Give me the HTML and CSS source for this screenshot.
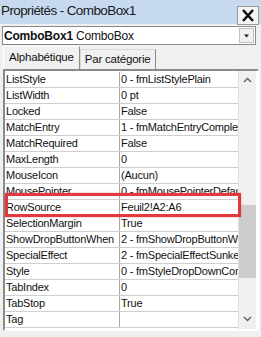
FILE: index.html
```html
<!DOCTYPE html>
<html lang="fr">
<head>
    <meta charset="UTF-8">
    <title>Propriétés - ComboBox1</title>
    <link rel="stylesheet" href="styles.css">
</head>
<body>
    <div class="window">
        <div class="titlebar">
            <span class="title">Propriétés - ComboBox1</span>
            <span class="close">
                <svg width="20" height="17" viewBox="0 0 20 17">
                    <path d="M5 3 L15 14 M15 3 L5 14" stroke="#111" stroke-width="2.6"/>
                </svg>
            </span>
        </div>

        <div class="combo">
            <span class="combo-text"><b>ComboBox1</b> ComboBox</span>
            <span class="combo-btn">
                <svg width="13" height="13" viewBox="0 0 13 13">
                    <path d="M4 5.5 L9 5.5 L6.5 8.5 Z" fill="#222"/>
                </svg>
            </span>
        </div>

        <div class="tabs">
            <span class="tab active">Alphabétique</span>
            <span class="tab">Par catégorie</span>
        </div>

        <div class="grid">
            <table class="props">
                <tr><td>ListStyle</td><td>0 - fmListStylePlain</td></tr>
                <tr><td>ListWidth</td><td>0 pt</td></tr>
                <tr><td>Locked</td><td>False</td></tr>
                <tr><td>MatchEntry</td><td>1 - fmMatchEntryComplete</td></tr>
                <tr><td>MatchRequired</td><td>False</td></tr>
                <tr><td>MaxLength</td><td>0</td></tr>
                <tr><td>MouseIcon</td><td>(Aucun)</td></tr>
                <tr><td>MousePointer</td><td>0 - fmMousePointerDefault</td></tr>
                <tr><td>RowSource</td><td>Feuil2!A2:A6</td></tr>
                <tr><td>SelectionMargin</td><td>True</td></tr>
                <tr><td>ShowDropButtonWhen</td><td>2 - fmShowDropButtonWhenAlways</td></tr>
                <tr><td>SpecialEffect</td><td>2 - fmSpecialEffectSunken</td></tr>
                <tr><td>Style</td><td>0 - fmStyleDropDownCombo</td></tr>
                <tr><td>TabIndex</td><td>0</td></tr>
                <tr><td>TabStop</td><td>True</td></tr>
                <tr><td>Tag</td><td></td></tr>
            </table>
            <div class="scrollbar">
                <svg class="arrow" width="17" height="12" viewBox="0 0 17 12">
                    <path d="M5 7 L8.5 3.5 L12 7" fill="none" stroke="#606060" stroke-width="1.4"/>
                </svg>
                <div class="track">
                    <div class="thumb"></div>
                </div>
                <svg class="arrow" width="17" height="12" viewBox="0 0 17 12">
                    <path d="M5 4 L8.5 7.5 L12 4" fill="none" stroke="#606060" stroke-width="1.4"/>
                </svg>
            </div>
            <div class="highlight"></div>
        </div>
    </div>
</body>
</html>
```

FILE: styles.css
```css
body {
    margin: 0;
    background-color: #f0f0f0;
    font-family: "Liberation Sans", Arial, sans-serif;
}

.window {
    width: 261px;
    height: 337px;
    background-color: #f0f0f0;
    overflow: hidden;
}

.titlebar {
    height: 24px;
    background-color: #c7d9ee;
    display: flex;
    align-items: flex-start;
    justify-content: space-between;
    padding-left: 1px;
}

.title {
    margin-top: 3px;
    font-size: 13.5px;
    letter-spacing: -0.6px;
    color: #1a1a1a;
}

.close {
    width: 20px;
    height: 17px;
    margin-top: 6px;
    margin-right: 2px;
    background-color: #f4f4f4;
    border: 1px solid #9a9a9a;
}

.close svg {
    display: block;
}

.combo {
    margin: 2px 5px 0 2px;
    height: 17px;
    background-color: #fff;
    border: 1px solid #8a8a8a;
    display: flex;
    align-items: center;
    justify-content: space-between;
}

.combo-text {
    font-size: 12px;
    letter-spacing: -0.2px;
    padding-left: 1px;
    color: #111;
}

.combo-btn {
    width: 13px;
    height: 13px;
    margin-right: 1px;
    background-color: #f0f0f0;
    border: 1px solid #c0c0c0;
}

.combo-btn svg {
    display: block;
}

.tabs {
    display: flex;
    align-items: flex-end;
    height: 24px;
    padding-left: 3px;
}

.tab {
    font-size: 11.5px;
    letter-spacing: -0.2px;
    color: #111;
    height: 19px;
    line-height: 19px;
    padding: 0 4px;
    background-color: #f0f0f0;
    border: 1px solid #d8d8d8;
    border-right-color: #8a8a8a;
    border-bottom: none;
}

.tab.active {
    height: 22px;
    line-height: 20px;
    padding: 0 5px;
    border-color: #fff #8a8a8a transparent #fff;
}

.grid {
    position: relative;
    margin: 0 2px 0 3px;
    height: 258px;
    border: 2px solid;
    border-color: #8a8a8a #fff #fff #8a8a8a;
    background-color: #fff;
    display: flex;
    align-items: flex-start;
}

.props {
    border-collapse: collapse;
    table-layout: fixed;
    width: 233px;
    margin-top: 1px;
    font-size: 11px;
    letter-spacing: -0.22px;
    color: #111;
}

.props td {
    height: 15px;
    padding: 0 0 0 1px;
    border-bottom: 1px solid #cfcfcf;
    white-space: nowrap;
    overflow: hidden;
    line-height: 15px;
}

.props td:first-child {
    width: 113px;
    border-right: 1px solid #a8a8a8;
}

.scrollbar {
    width: 17px;
    height: 258px;
    display: flex;
    flex-direction: column;
    background-color: #f0f0f0;
    border-left: 1px solid #e0e0e0;
}

.arrow {
    display: block;
    flex: none;
    margin-top: 4px;
}

.arrow:last-child {
    margin-top: 0;
    margin-bottom: 4px;
}

.track {
    flex: 1;
    padding-top: 118px;
}

.thumb {
    height: 73px;
    background-color: #cdcdcd;
}

.highlight {
    position: absolute;
    left: 0;
    top: 122px;
    width: 230px;
    height: 18px;
    border: 3px solid #e2393f;
    box-shadow: 0 0 2px rgba(226, 57, 63, 0.5);
}
```
